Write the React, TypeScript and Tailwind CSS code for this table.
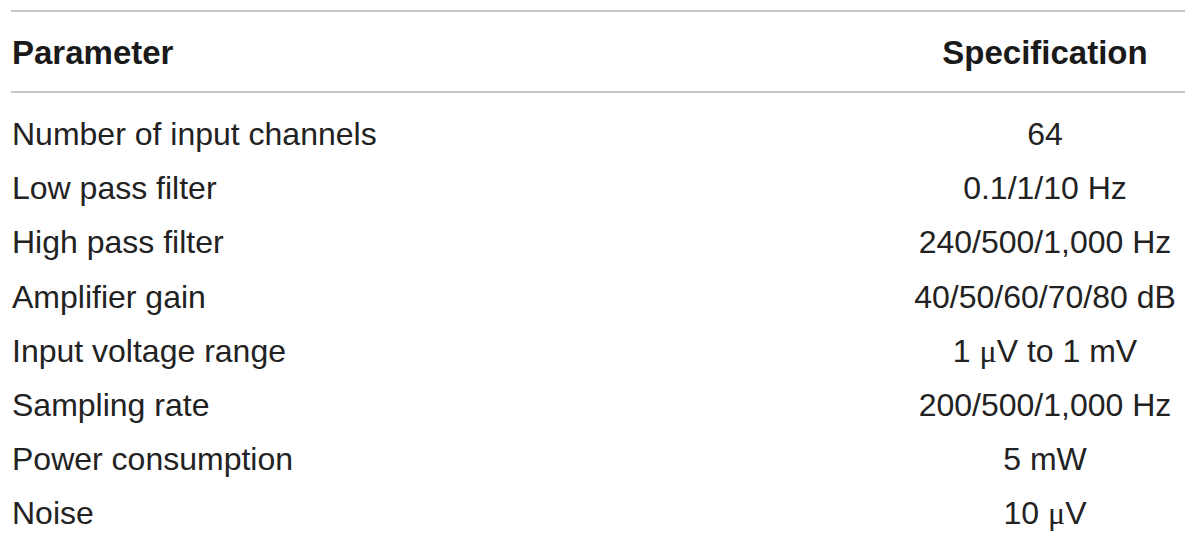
import React from "react";

const rows: [string, React.ReactNode][] = [
  ["Number of input channels", "64"],
  ["Low pass filter", "0.1/1/10 Hz"],
  ["High pass filter", "240/500/1,000 Hz"],
  ["Amplifier gain", "40/50/60/70/80 dB"],
  ["Input voltage range", <>1 <Mu />V to 1 mV</>],
  ["Sampling rate", "200/500/1,000 Hz"],
  ["Power consumption", "5 mW"],
  ["Noise", <>10 <Mu />V</>],
];

// symbol-font style micro sign
function Mu() {
  return <span className="font-['Liberation_Serif',serif]">{"\u03bc"}</span>;
}

export default function App() {
  return (
    <div className="w-[1200px] h-[543px] bg-white pt-[10px] pl-[11px] pr-[15px] font-['Liberation_Sans',Arial,sans-serif] text-[#222] overflow-hidden">
      <div className="border-t-2 border-[#c6c6c6]">
        {/* header */}
        <div className="grid grid-cols-[1fr_280px] items-center h-[81px] pt-[3px] border-b-2 border-[#c6c6c6] text-[33px] font-bold text-[#1a1a1a]">
          <div className="pl-[1px]">Parameter</div>
          <div className="text-center">Specification</div>
        </div>

        <div className="pt-[14px] text-[32px]">
          {rows.map(([param, spec]) => (
            <div key={param} className="grid grid-cols-[1fr_280px] items-center h-[54.2px]">
              <div className="pl-[1px]">{param}</div>
              <div className="text-center">{spec}</div>
            </div>
          ))}
        </div>
      </div>
    </div>
  );
}
